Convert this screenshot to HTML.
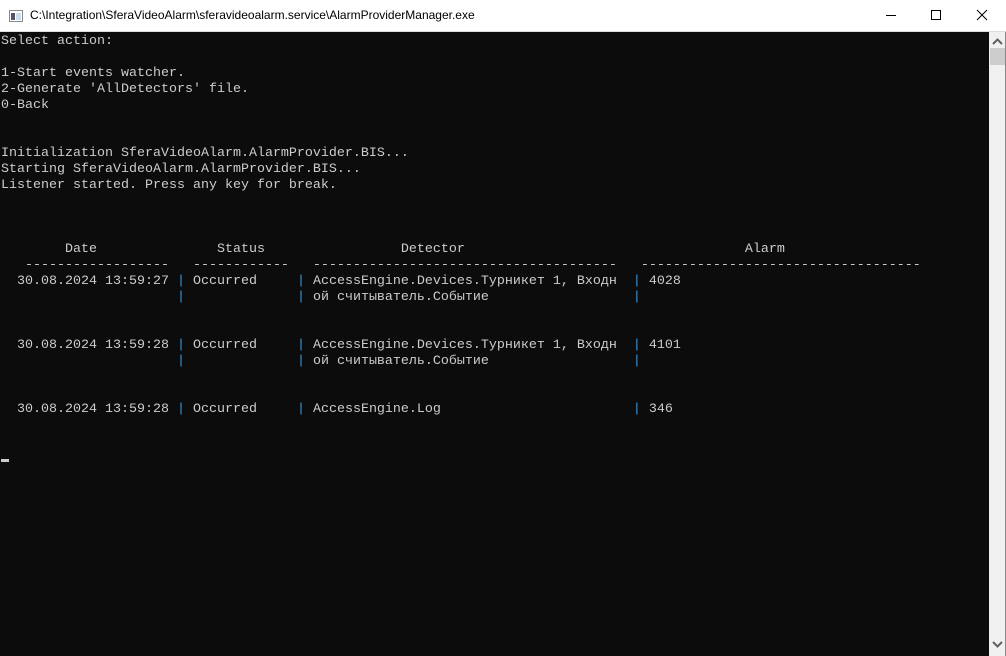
<!DOCTYPE html>
<html><head><meta charset="utf-8"><style>
body{margin:0;width:1006px;height:656px;overflow:hidden;background:#fff;position:relative;font-family:"Liberation Sans",sans-serif}
#tb{position:absolute;left:0;top:0;width:1006px;height:31px;background:#fff;border-bottom:1px solid #ddd}
#tt{position:absolute;left:30px;top:8px;font-size:12px;color:#000}
#con{position:absolute;left:0;top:32px;width:989px;height:624px;background:#0c0c0c}
pre{margin:0;padding:2px 0 0 1px;font-family:"Liberation Mono",monospace;font-size:13.33px;line-height:16px;color:#cccccc}
.b{color:#3a96dd}
#sb{position:absolute;left:989px;top:32px;width:16px;height:624px;background:#f0f0f0;border-right:1px solid #888}
</style></head><body>
<div id="tb">
<svg style="position:absolute;left:9px;top:10px" width="14" height="12"><rect x="0.5" y="0.5" width="13" height="11" fill="#fff" stroke="#888"/><rect x="2" y="3" width="4" height="7" fill="#556"/><rect x="7" y="3" width="5" height="7" fill="#cde"/></svg>
<div id="tt">C:\Integration\SferaVideoAlarm\sferavideoalarm.service\AlarmProviderManager.exe</div>
<svg style="position:absolute;left:880px;top:8px" width="120" height="16"><line x1="6" y1="7.5" x2="16" y2="7.5" stroke="#000"/><rect x="51.5" y="2.5" width="9" height="9" fill="none" stroke="#000"/><path d="M97 2 L107 12 M107 2 L97 12" stroke="#000"/></svg>
</div>
<div id="con"><pre>Select action:

1-Start events watcher.
2-Generate 'AllDetectors' file.
0-Back


Initialization SferaVideoAlarm.AlarmProvider.BIS...
Starting SferaVideoAlarm.AlarmProvider.BIS...
Listener started. Press any key for break.



        Date               Status                 Detector                                   Alarm
   ------------------   ------------   --------------------------------------   -----------------------------------
  30.08.2024 13:59:27 <span class="b">|</span> Occurred     <span class="b">|</span> AccessEngine.Devices.Турникет 1, Входн  <span class="b">|</span> 4028
                      <span class="b">|</span>              <span class="b">|</span> ой считыватель.Событие                  <span class="b">|</span>


  30.08.2024 13:59:28 <span class="b">|</span> Occurred     <span class="b">|</span> AccessEngine.Devices.Турникет 1, Входн  <span class="b">|</span> 4101
                      <span class="b">|</span>              <span class="b">|</span> ой считыватель.Событие                  <span class="b">|</span>


  30.08.2024 13:59:28 <span class="b">|</span> Occurred     <span class="b">|</span> AccessEngine.Log                        <span class="b">|</span> 346
</pre>
<div style="position:absolute;left:1px;top:427px;width:8px;height:3px;background:#ccc"></div>
</div>
<div id="sb">
<svg style="position:absolute;left:3px;top:6px" width="11" height="8"><path d="M1 6 L5.5 1.5 L10 6" stroke="#606060" stroke-width="2" fill="none"/></svg>
<div style="position:absolute;left:1px;top:16px;width:15px;height:17px;background:#cdcdcd"></div>
<svg style="position:absolute;left:3px;top:608px" width="11" height="8"><path d="M1 2 L5.5 6.5 L10 2" stroke="#606060" stroke-width="2" fill="none"/></svg>
</div>
</body></html>
